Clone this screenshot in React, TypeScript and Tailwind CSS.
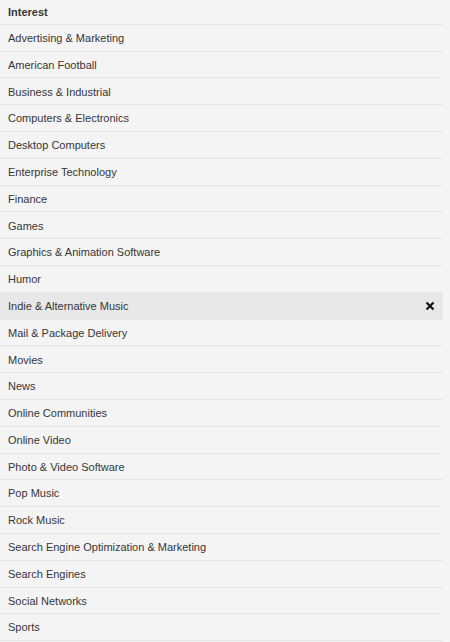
import { useState } from "react";

const interests = [
  "Advertising & Marketing",
  "American Football",
  "Business & Industrial",
  "Computers & Electronics",
  "Desktop Computers",
  "Enterprise Technology",
  "Finance",
  "Games",
  "Graphics & Animation Software",
  "Humor",
  "Indie & Alternative Music",
  "Mail & Package Delivery",
  "Movies",
  "News",
  "Online Communities",
  "Online Video",
  "Photo & Video Software",
  "Pop Music",
  "Rock Music",
  "Search Engine Optimization & Marketing",
  "Search Engines",
  "Social Networks",
  "Sports",
];

const App = () => {
  const [hovered, setHovered] = useState<string | null>("Indie & Alternative Music");

  return (
    <div
      className="min-h-[642px] bg-[#f4f4f4] text-[11px] text-[#363636]"
      style={{ fontFamily: '"Liberation Sans", Arial, sans-serif' }}
    >
      <ul className="w-[443px]">
        <li className="h-[24.8px] box-border border-b border-[#e4e4e4] flex items-center px-2 font-bold">
          Interest
        </li>
        {interests.map((name) => (
          <li
            key={name}
            onMouseEnter={() => setHovered(name)}
            className={`h-[26.8px] box-border border-b border-[#e4e4e4] flex items-center justify-between px-2 pt-[1px] ${
              hovered === name ? "bg-[#e8e8e8]" : ""
            }`}
          >
            <span>{name}</span>
            {hovered === name && (
              <svg width="10" height="10" viewBox="0 0 10 10">
                <path d="M1.5 1.5L8.5 8.5M8.5 1.5L1.5 8.5" stroke="#111" strokeWidth="2.2" />
              </svg>
            )}
          </li>
        ))}
      </ul>
    </div>
  );
};

export default App;
